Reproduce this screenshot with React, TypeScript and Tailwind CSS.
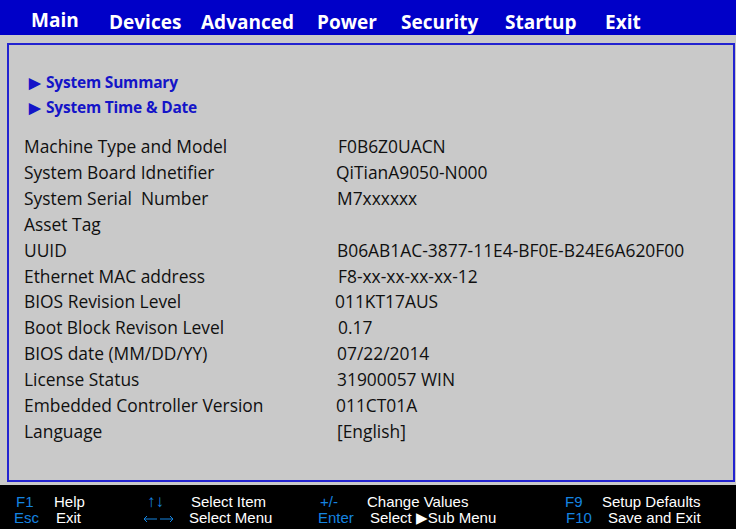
import React from "react";

const tabs: { label: string; w: string; active?: boolean }[] = [
  { label: "Main", w: "w-[78px]", active: true },
  { label: "Devices", w: "w-[92px]" },
  { label: "Advanced", w: "w-[116px]" },
  { label: "Power", w: "w-[84px]" },
  { label: "Security", w: "w-[104px]" },
  { label: "Startup", w: "w-[100px]" },
  { label: "Exit", w: "w-[60px]" },
];

const rows: [string, string, string][] = [
  ["Machine Type and Model", "F0B6Z0UACN", "ml-[1px]"],
  ["System Board Idnetifier", "QiTianA9050-N000", "ml-[-1px]"],
  ["System Serial  Number", "M7xxxxxx", ""],
  ["Asset Tag", "", ""],
  ["UUID", "B06AB1AC-3877-11E4-BF0E-B24E6A620F00", ""],
  ["Ethernet MAC address", "F8-xx-xx-xx-xx-12", "ml-[1px]"],
  ["BIOS Revision Level", "011KT17AUS", "ml-[-2px]"],
  ["Boot Block Revison Level", "0.17", "ml-[1px]"],
  ["BIOS date (MM/DD/YY)", "07/22/2014", ""],
  ["License Status", "31900057 WIN", ""],
  ["Embedded Controller Version", "011CT01A", "ml-[-1px]"],
  ["Language", "[English]", ""],
];

const seg = { fontFamily: '"Open Sans", "Noto Sans", sans-serif' };
const arial = { fontFamily: '"Liberation Sans", Arial, sans-serif' };

function LongArrows() {
  return (
    <svg width="32" height="10" viewBox="0 0 32 10" className="mt-[4px]">
      <g stroke="#1584e0" strokeWidth="1" fill="none">
        <line x1="1" y1="5" x2="14" y2="5" />
        <polyline points="4,2 1,5 4,8" />
        <line x1="17" y1="5" x2="30" y2="5" />
        <polyline points="27,2 30,5 27,8" />
      </g>
    </svg>
  );
}

export default function App() {
  return (
    <div className="w-[736px] h-[529px] overflow-hidden flex flex-col bg-[#c9c9c9]">
      {/* top menu bar */}
      <div
        className="h-[35px] bg-[#0000c8] flex pl-[31px] text-white font-bold text-[19px]"
        style={seg}
      >
        {tabs.map((t) => (
          <div
            key={t.label}
            className={`${t.w} leading-none ${t.active ? "pt-[11px]" : "pt-[13px]"}`}
          >
            {t.label}
          </div>
        ))}
      </div>

      {/* main area */}
      <div className="h-[450px] pt-[8px] pl-[7px] pr-[1px] pb-[3px]">
        <div
          className="h-full border-2 border-[#2222d0] pl-[15px] pt-[25px] text-[#101010]"
          style={seg}
        >
          <div className="pl-[5px] text-[#1414c8] font-bold text-[15.5px] leading-[25px]">
            <div className="flex items-center">
              <span className="text-[15px] w-[17px] leading-none">▶</span>
              <span className="tracking-[-0.2px]">System Summary</span>
            </div>
            <div className="flex items-center">
              <span className="text-[15px] w-[17px] leading-none">▶</span>
              <span className="tracking-[-0.2px]">System Time &amp; Date</span>
            </div>
          </div>
          <div className="mt-[14px] text-[17.4px] leading-[25.9px]">
            {rows.map(([l, v, o]) => (
              <div key={l} className="flex">
                <div className="w-[313px] whitespace-pre">{l}</div>
                <div className={o}>{v}</div>
              </div>
            ))}
          </div>
        </div>
      </div>

      {/* footer */}
      <div
        className="flex-1 bg-black text-white text-[15px] leading-[16px] pt-[9px]"
        style={arial}
      >
        <div className="flex pl-[16px]">
          <div className="w-[38px] text-[#1584e0]">F1</div>
          <div className="w-[93px]">Help</div>
          <div className="w-[44px] text-[#1584e0] text-[17px]">↑↓</div>
          <div className="w-[129px]">Select Item</div>
          <div className="w-[47px] text-[#1584e0]">+/-</div>
          <div className="w-[198px]">Change Values</div>
          <div className="w-[37px] text-[#1584e0]">F9</div>
          <div>Setup Defaults</div>
        </div>
        <div className="flex pl-[14px]">
          <div className="w-[42px] text-[#1584e0]">Esc</div>
          <div className="w-[87px]">Exit</div>
          <div className="w-[46px]">
            <LongArrows />
          </div>
          <div className="w-[129px]">Select Menu</div>
          <div className="w-[52px] text-[#1584e0]">Enter</div>
          <div className="w-[196px]">
            Select <span className="text-[15px]">▶</span>Sub Menu
          </div>
          <div className="w-[42px] text-[#1584e0]">F10</div>
          <div>Save and Exit</div>
        </div>
      </div>
    </div>
  );
}
